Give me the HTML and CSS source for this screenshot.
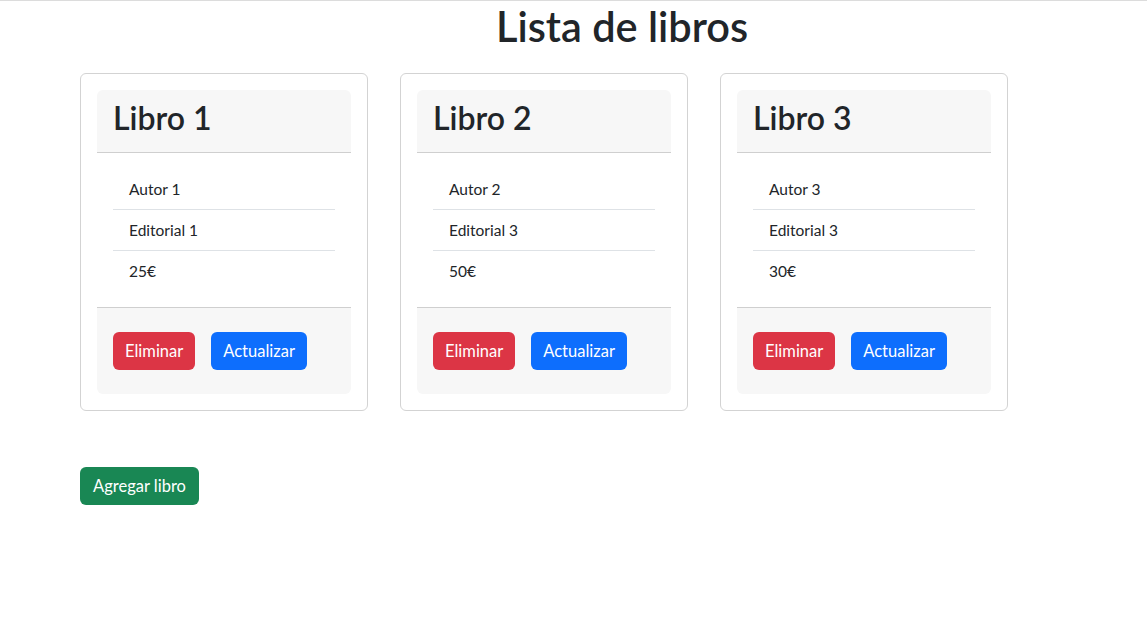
FILE: index.html
```html
<!DOCTYPE html>
<html lang="es">
<head>
<meta charset="utf-8">
<title>Lista de libros</title>
<link rel="stylesheet" href="styles.css">
</head>
<body>
<h1 class="title">Lista de libros</h1>
<main class="content">
  <div class="cards">
    <div class="card">
      <div class="card-body">
        <div class="card-header"><h2>Libro 1</h2></div>
        <ul class="list">
          <li>Autor 1</li>
          <li>Editorial 1</li>
          <li>25€</li>
        </ul>
        <div class="card-footer">
          <button class="btn btn-danger">Eliminar</button>
          <button class="btn btn-primary">Actualizar</button>
        </div>
      </div>
    </div>
    <div class="card">
      <div class="card-body">
        <div class="card-header"><h2>Libro 2</h2></div>
        <ul class="list">
          <li>Autor 2</li>
          <li>Editorial 3</li>
          <li>50€</li>
        </ul>
        <div class="card-footer">
          <button class="btn btn-danger">Eliminar</button>
          <button class="btn btn-primary">Actualizar</button>
        </div>
      </div>
    </div>
    <div class="card">
      <div class="card-body">
        <div class="card-header"><h2>Libro 3</h2></div>
        <ul class="list">
          <li>Autor 3</li>
          <li>Editorial 3</li>
          <li>30€</li>
        </ul>
        <div class="card-footer">
          <button class="btn btn-danger">Eliminar</button>
          <button class="btn btn-primary">Actualizar</button>
        </div>
      </div>
    </div>
  </div>
  <button class="btn btn-success">Agregar libro</button>
</main>
</body>
</html>
```

FILE: styles.css
```css
* { box-sizing: border-box; }
html, body { margin: 0; padding: 0; }
body {
  font-family: Lato, "Noto Sans", sans-serif;
  font-size: 15.5px;
  line-height: 1.5;
  color: #212529;
  background: #fff;
  border-top: 1px solid #dcdcdc;
}
.title {
  margin: 0;
  padding: 2px 0 0 97px;
  text-align: center;
  font-size: 41.5px;
  font-weight: 600;
  line-height: 47px;
}
.content {
  padding: 23px 0 0 80px;
}
.cards {
  display: flex;
  gap: 32px;
  margin-bottom: 56px;
}
.card {
  width: 288px;
  border: 1px solid #d3d3d3;
  border-radius: 6px;
  background: #fff;
}
.card-body {
  padding: 16px;
}
.card-header {
  background: #f7f7f7;
  border-bottom: 1px solid #cfcfcf;
  border-radius: 6px 6px 0 0;
  padding: 9px 16px 8px;
  height: 63px;
}
.card-header h2 {
  margin: 0;
  font-size: 32px;
  font-weight: 600;
  line-height: 38px;
}
.list {
  list-style: none;
  margin: 0;
  padding: 16px;
}
.list li {
  padding: 8px 16px;
  line-height: 24px;
  border-bottom: 1px solid #dee2e6;
}
.list li:last-child { border-bottom: none; }
.card-footer {
  background: #f7f7f7;
  border-top: 1px solid #cfcfcf;
  border-radius: 0 0 6px 6px;
  padding: 24px 16px;
  display: flex;
  gap: 16px;
}
.btn {
  font-family: inherit;
  font-size: 16.5px;
  line-height: 24px;
  padding: 7px 12px;
  border: none;
  border-radius: 6px;
  color: #fff;
  height: 38px;
}
.btn-danger { background: #dc3545; }
.btn-primary { background: #0d6efd; }
.btn-success { background: #198754; }
.content > .btn-success { padding: 7px 13px; }
```
